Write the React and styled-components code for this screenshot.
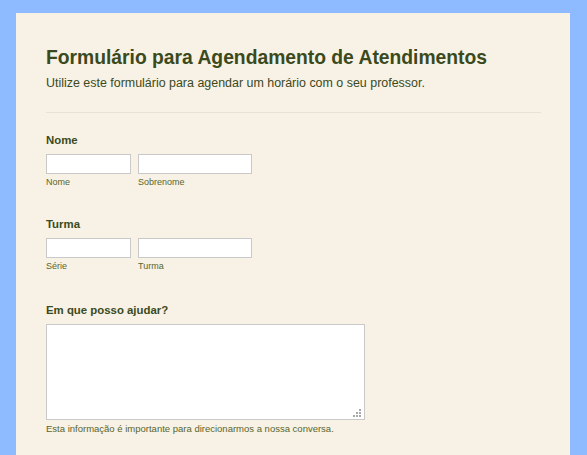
import React from "react";
import styled, { createGlobalStyle } from "styled-components";

const Global = createGlobalStyle`
  html, body { margin: 0; padding: 0; background: #8ebbff; }
  body { font-family: "Liberation Sans", Arial, sans-serif; }
  * { box-sizing: border-box; }
`;

const Page = styled.div`
  padding: 13px 17px 0 16px;
  height: 100vh;
  display: flex;
  flex-direction: column;
  overflow: hidden;
`;

const Card = styled.form`
  flex: 1;
  background: #f8f1e6;
  padding: 32px 29px 0 30px;
`;

const Header = styled.div`
  padding-bottom: 20px;
  border-bottom: 1px solid #e6e2d8;
  margin-bottom: 20px;
`;

const Title = styled.h1`
  margin: 0;
  font-size: 19.3px;
  line-height: 26px;
  font-weight: bold;
  color: #3b4a1c;
`;

const Subtitle = styled.p`
  margin: 4px 0 0;
  font-size: 12.45px;
  line-height: 17px;
  color: #3b4a1c;
`;

const Field = styled.div`
  margin-bottom: ${(p) => p.$gap ?? 29}px;
`;

const Label = styled.label`
  display: block;
  font-size: 11.4px;
  line-height: 14px;
  font-weight: bold;
  color: #3b4a1c;
  margin-bottom: 7px;
`;

const Row = styled.div`
  display: flex;
  gap: 7px;
`;

const Sub = styled.div`
  display: flex;
  flex-direction: column;
`;

const Input = styled.input`
  width: ${(p) => p.$w}px;
  height: 20px;
  border: 1px solid #c9c9c9;
  background: #fff;
  margin: 0;
  padding: 2px 4px;
  outline: none;
`;

const Hint = styled.span`
  font-size: ${(p) => p.$size || 9}px;
  line-height: 11px;
  color: #57662c;
  margin-top: 3px;
`;

const AreaWrap = styled.div`
  position: relative;
  width: 319px;
  height: 96px;
`;

const Area = styled.textarea`
  display: block;
  width: 100%;
  height: 100%;
  border: 1px solid #c9c9c9;
  background: #fff;
  margin: 0;
  padding: 4px;
  outline: none;
  resize: none;
`;

const Grip = styled.svg`
  position: absolute;
  right: 4px;
  bottom: 3px;
  pointer-events: none;
`;

export default function App() {
  return (
    <>
      <Global />
      <Page>
        <Card>
          <Header>
            <Title>Formulário para Agendamento de Atendimentos</Title>
            <Subtitle>Utilize este formulário para agendar um horário com o seu professor.</Subtitle>
          </Header>
          <Field>
            <Label>Nome</Label>
            <Row>
              <Sub>
                <Input $w={85} />
                <Hint>Nome</Hint>
              </Sub>
              <Sub>
                <Input $w={114} />
                <Hint>Sobrenome</Hint>
              </Sub>
            </Row>
          </Field>
          <Field $gap={31}>
            <Label>Turma</Label>
            <Row>
              <Sub>
                <Input $w={85} />
                <Hint>Série</Hint>
              </Sub>
              <Sub>
                <Input $w={114} />
                <Hint>Turma</Hint>
              </Sub>
            </Row>
          </Field>
          <Field $gap={0}>
            <Label>Em que posso ajudar?</Label>
            <Sub>
              <AreaWrap>
                <Area />
                <Grip width="8" height="8" viewBox="0 0 8 8">
                  <g fill="#a8a8a8">
                    <rect x="6" y="0" width="2" height="2" />
                    <rect x="3" y="3" width="2" height="2" />
                    <rect x="6" y="3" width="2" height="2" />
                    <rect x="0" y="6" width="2" height="2" />
                    <rect x="3" y="6" width="2" height="2" />
                    <rect x="6" y="6" width="2" height="2" />
                  </g>
                </Grip>
              </AreaWrap>
              <Hint $size={9.5}>Esta informação é importante para direcionarmos a nossa conversa.</Hint>
            </Sub>
          </Field>
        </Card>
      </Page>
    </>
  );
}
